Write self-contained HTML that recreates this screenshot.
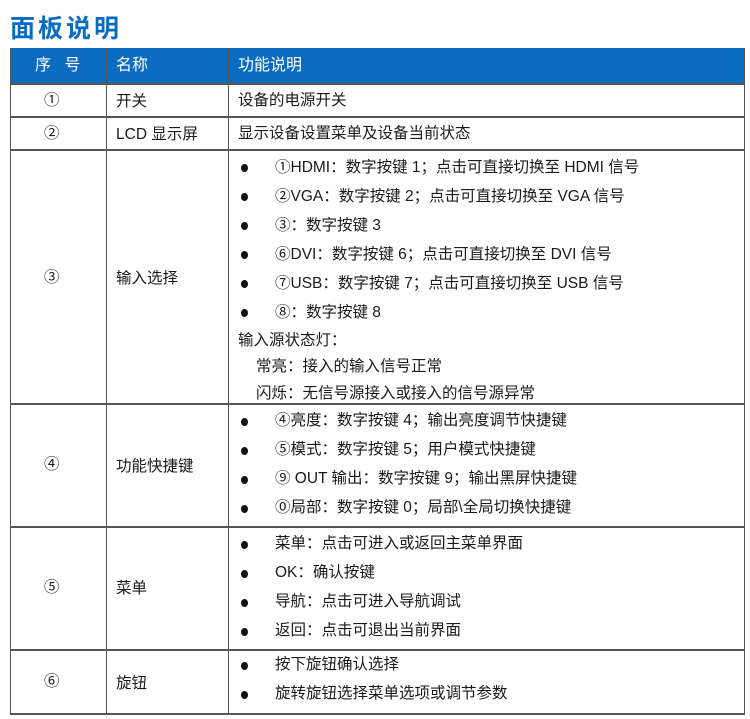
<!DOCTYPE html>
<html><head><meta charset="utf-8"><style>
body{margin:0;width:750px;height:719px;background:#fff;position:relative;overflow:hidden;font-family:"Liberation Sans","Noto Sans CJK SC",sans-serif;color:#1a1a1a;font-size:15.5px}
.t{position:absolute;white-space:nowrap;line-height:16px}
.h{position:absolute;background:#0a6cc0;left:10px;top:48px;width:735px;height:35px}
.hl{position:absolute;background:#555;height:2px;left:10px;width:735px}
.vl{position:absolute;background:#555;width:1px;top:48px;height:667px}
.w{color:#fff;font-size:16px}
.b{position:absolute;width:7px;height:8px;border-radius:50%;background:#111;left:241px}
</style></head><body>
<div class="t" style="left:10px;top:12px;font-size:25px;line-height:30px;font-weight:bold;color:#0a6cc0;font-family:'Noto Sans CJK SC',sans-serif;letter-spacing:3px">面板说明</div>
<div class="h"></div>
<div class="vl" style="left:10px"></div><div class="vl" style="left:106px"></div><div class="vl" style="left:228px"></div><div class="vl" style="left:744px"></div>
<div class="hl" style="top:83px"></div><div class="hl" style="top:116px"></div><div class="hl" style="top:149px"></div><div class="hl" style="top:403px"></div><div class="hl" style="top:526px"></div><div class="hl" style="top:649px"></div><div class="hl" style="top:713px"></div>
<div class="t w" style="left:35px;top:58px">序&nbsp;&nbsp;&nbsp;号</div>
<div class="t w" style="left:116px;top:58px">名称</div>
<div class="t w" style="left:238px;top:58px">功能说明</div>
<div class="t" style="left:44px;top:93px">①</div><div class="t" style="left:116px;top:94px">开关</div><div class="t" style="left:238px;top:93px">设备的电源开关</div>
<div class="t" style="left:44px;top:126px">②</div><div class="t" style="left:116px;top:127px">LCD 显示屏</div><div class="t" style="left:238px;top:126px">显示设备设置菜单及设备当前状态</div>
<div class="t" style="left:44px;top:270px">③</div><div class="t" style="left:116px;top:271px">输入选择</div>
<div class="b" style="top:164px"></div><div class="t" style="left:275px;top:160px">①HDMI：数字按键 1；点击可直接切换至 HDMI 信号</div>
<div class="b" style="top:193px"></div><div class="t" style="left:275px;top:189px">②VGA：数字按键 2；点击可直接切换至 VGA 信号</div>
<div class="b" style="top:222px"></div><div class="t" style="left:275px;top:218px">③：数字按键 3</div>
<div class="b" style="top:251px"></div><div class="t" style="left:275px;top:247px">⑥DVI：数字按键 6；点击可直接切换至 DVI 信号</div>
<div class="b" style="top:280px"></div><div class="t" style="left:275px;top:276px">⑦USB：数字按键 7；点击可直接切换至 USB 信号</div>
<div class="b" style="top:309px"></div><div class="t" style="left:275px;top:305px">⑧：数字按键 8</div>
<div class="t" style="left:238px;top:333px">输入源状态灯：</div>
<div class="t" style="left:256px;top:359px">常亮：接入的输入信号正常</div>
<div class="t" style="left:256px;top:386px">闪烁：无信号源接入或接入的信号源异常</div>
<div class="t" style="left:44px;top:457px">④</div><div class="t" style="left:116px;top:459px">功能快捷键</div>
<div class="b" style="top:418px"></div><div class="t" style="left:275px;top:413px">④亮度：数字按键 4；输出亮度调节快捷键</div>
<div class="b" style="top:447px"></div><div class="t" style="left:275px;top:442px">⑤模式：数字按键 5；用户模式快捷键</div>
<div class="b" style="top:476px"></div><div class="t" style="left:275px;top:471px">⑨ OUT 输出：数字按键 9；输出黑屏快捷键</div>
<div class="b" style="top:505px"></div><div class="t" style="left:275px;top:500px">⓪局部：数字按键 0；局部\全局切换快捷键</div>
<div class="t" style="left:44px;top:580px">⑤</div><div class="t" style="left:116px;top:581px">菜单</div>
<div class="b" style="top:541px"></div><div class="t" style="left:275px;top:536px">菜单：点击可进入或返回主菜单界面</div>
<div class="b" style="top:570px"></div><div class="t" style="left:275px;top:565px">OK：确认按键</div>
<div class="b" style="top:599px"></div><div class="t" style="left:275px;top:594px">导航：点击可进入导航调试</div>
<div class="b" style="top:628px"></div><div class="t" style="left:275px;top:623px">返回：点击可退出当前界面</div>
<div class="t" style="left:44px;top:674px">⑥</div><div class="t" style="left:116px;top:676px">旋钮</div>
<div class="b" style="top:662px"></div><div class="t" style="left:275px;top:657px">按下旋钮确认选择</div>
<div class="b" style="top:691px"></div><div class="t" style="left:275px;top:686px">旋转旋钮选择菜单选项或调节参数</div>
</body></html>
